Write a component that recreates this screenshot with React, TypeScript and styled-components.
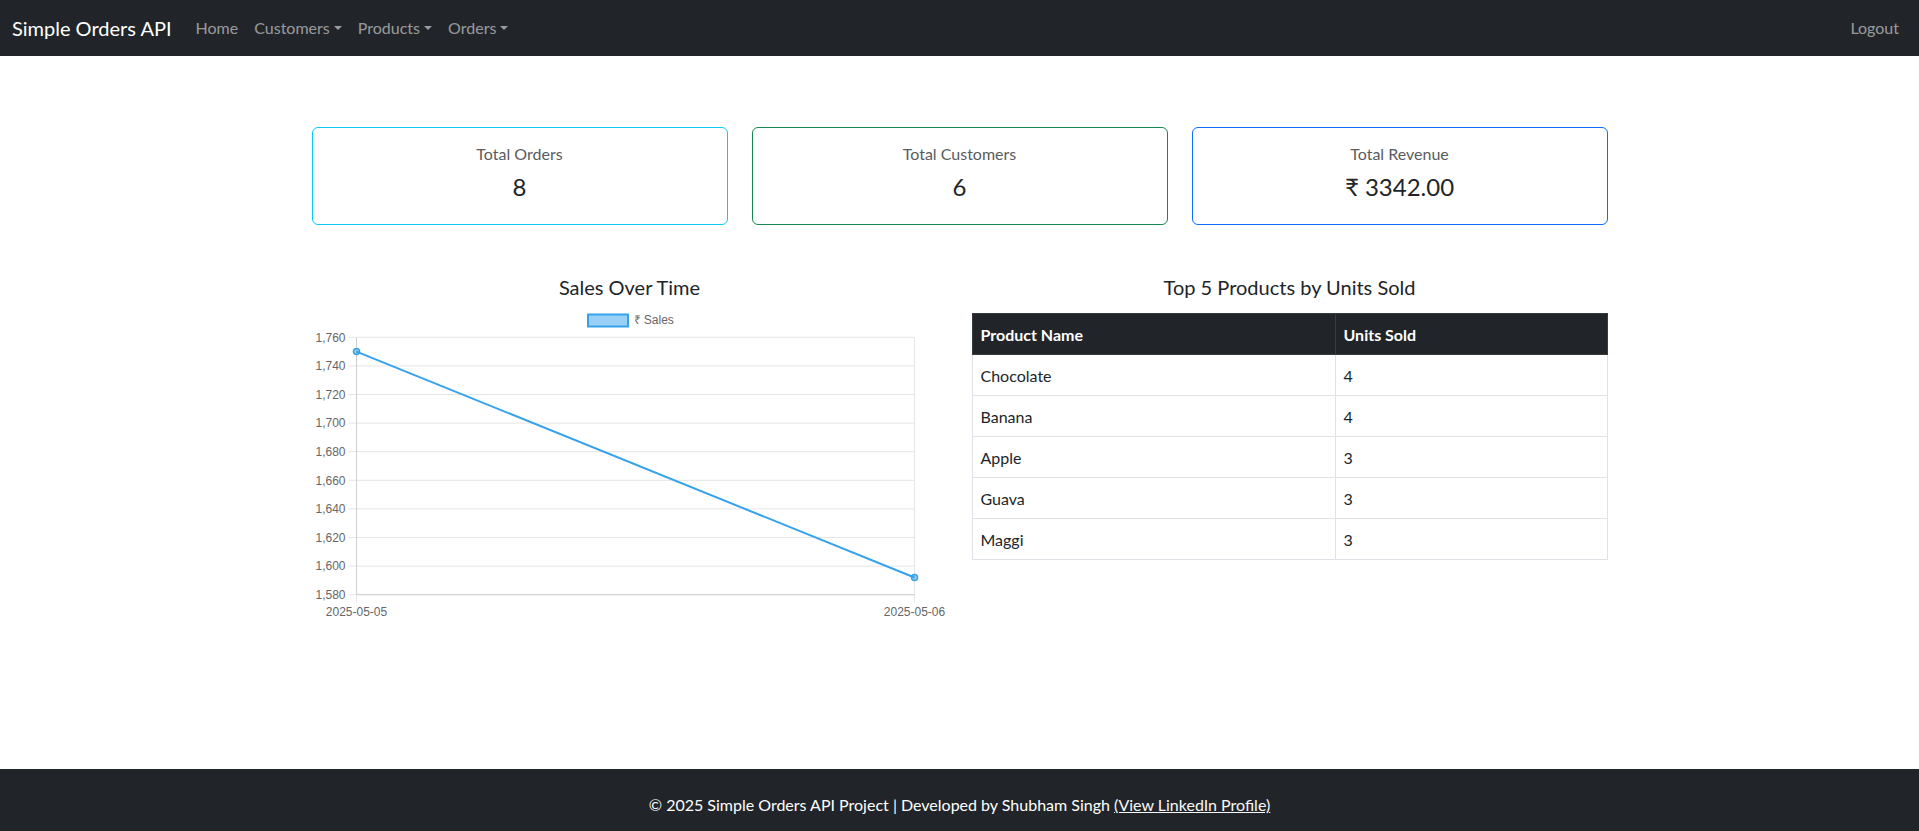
import React from 'react';
import styled, { createGlobalStyle, css } from 'styled-components';

const GlobalStyle = createGlobalStyle`
  *, *::before, *::after { box-sizing: border-box; }
  html, body { margin: 0; padding: 0; }
  body {
    font-family: Lato, "Open Sans", "Noto Sans", sans-serif;
    font-size: 16px;
    line-height: 1.5;
    color: #212529;
    background: #fff;
  }
`;

const Page = styled.div`
  min-height: 100vh;
  display: flex;
  flex-direction: column;
`;

// ---- navbar ----
const Navbar = styled.nav`
  background: #212529;
  height: 56px;
  padding: 8px 12px;
  display: flex;
  align-items: center;
`;

const Brand = styled.a`
  color: #fff;
  font-size: 20px;
  line-height: 30px;
  padding: 5px 0;
  margin-right: 16px;
  text-decoration: none;
`;

const NavList = styled.ul<{ $end?: boolean }>`
  display: flex;
  list-style: none;
  margin: 0;
  padding: 0;
  ${(p) => p.$end && css`margin-left: auto;`}
`;

const caret = css`
  &::after {
    content: '';
    display: inline-block;
    margin-left: 0.255em;
    vertical-align: 0.255em;
    border-top: 0.3em solid;
    border-right: 0.3em solid transparent;
    border-left: 0.3em solid transparent;
    border-bottom: 0;
  }
`;

const NavLink = styled.a<{ $dropdown?: boolean }>`
  display: block;
  padding: 8px;
  line-height: 24px;
  color: rgba(255, 255, 255, 0.55);
  text-decoration: none;
  ${(p) => p.$dropdown && caret}
`;

// ---- main ----
const Main = styled.main`
  flex: 1;
  width: 100%;
  max-width: 1320px;
  margin: 0 auto;
  padding: 71px 12px 0;
`;

const StatsRow = styled.div`
  display: grid;
  grid-template-columns: repeat(3, 1fr);
  gap: 24px;
`;

const StatCard = styled.div<{ $accent: string }>`
  border: 1px solid ${(p) => p.$accent};
  border-radius: 6px;
  padding: 16px;
  text-align: center;
`;

const StatLabel = styled.h6`
  margin: 0 0 10px;
  font-size: 16px;
  line-height: 1.2;
  font-weight: 400;
  color: #595c5f;
`;

const StatValue = styled.h4`
  margin: 0 0 6px;
  font-size: 24px;
  line-height: 1.2;
  font-weight: 400;
  color: #212529;
`;

const PanelRow = styled.div`
  display: grid;
  grid-template-columns: repeat(2, 1fr);
  gap: 24px;
  margin-top: 50px;
`;

const PanelTitle = styled.h5`
  margin: 0 0 14px;
  font-size: 20px;
  line-height: 1.2;
  font-weight: 400;
  text-align: center;
`;

const ChartSvg = styled.svg`
  display: block;
  width: 636px;
  height: 312px;
  font-family: "Liberation Sans", Arial, sans-serif;
`;

const Table = styled.table`
  width: 100%;
  border-collapse: collapse;

  th, td {
    padding: 9px 8px 7px;
    line-height: 24px;
    text-align: left;
    border: 1px solid #dee2e6;
  }

  thead th {
    background: #212529;
    color: #fff;
    font-weight: 700;
    border-color: #373b3e;
  }

  th:first-child {
    width: 363px;
  }
`;

// ---- footer ----
const Footer = styled.footer`
  background: #212529;
  color: #fff;
  text-align: center;
  padding: 24px 12px 14px;
  line-height: 24px;
`;

const FooterLink = styled.a`
  color: #f8f9fa;
  text-decoration: underline;
`;

const stats = [
  { label: 'Total Orders', value: '8', accent: '#0dcaf0' },
  { label: 'Total Customers', value: '6', accent: '#198754' },
  { label: 'Total Revenue', value: '₹ 3342.00', accent: '#0d6efd' },
];

const products = [
  { name: 'Chocolate', units: 4 },
  { name: 'Banana', units: 4 },
  { name: 'Apple', units: 3 },
  { name: 'Guava', units: 3 },
  { name: 'Maggi', units: 3 },
];

const sales = [
  { date: '2025-05-05', amount: 1750 },
  { date: '2025-05-06', amount: 1592 },
];

const SalesChart: React.FC = () => {
  const left = 44.5;
  const right = 602.5;
  const top = 24.3;
  const step = 28.6;
  const min = 1580;
  const max = 1760;
  const bottom = top + step * 9;
  const ticks = Array.from({ length: 10 }, (_, i) => max - i * 20);
  const yOf = (v: number) => bottom - ((v - min) / (max - min)) * (bottom - top);
  const xOf = (i: number) => left + (i * (right - left)) / (sales.length - 1);
  const pts = sales.map((s, i) => `${xOf(i)},${yOf(s.amount)}`).join(' ');

  return (
    <ChartSvg viewBox="0 0 636 312">
      {/* legend */}
      <rect x={276} y={1.5} width={40} height={12} fill="rgba(54,162,235,0.5)" stroke="#36a2eb" strokeWidth={2} />
      <text x={321.5} y={11} fontSize={12} fill="#666">₹ Sales</text>

      {/* horizontal grid + ticks */}
      {ticks.map((t, i) => {
        const y = top + i * step;
        return (
          <g key={t}>
            <line x1={left - 8} x2={right} y1={y} y2={y} stroke="#e5e5e5" strokeWidth={1} />
            <text x={33.5} y={y + 4.2} fontSize={12} fill="#666" textAnchor="end">
              {t.toLocaleString('en-US')}
            </text>
          </g>
        );
      })}

      {/* vertical grid + x labels */}
      {sales.map((s, i) => (
        <g key={s.date}>
          <line x1={xOf(i)} x2={xOf(i)} y1={top} y2={bottom + 8} stroke="#e5e5e5" strokeWidth={1} />
          <text x={xOf(i)} y={303} fontSize={12} fill="#666" textAnchor="middle">{s.date}</text>
        </g>
      ))}

      {/* axis borders */}
      <line x1={left} x2={left} y1={top} y2={bottom} stroke="#cfcfcf" strokeWidth={1} />
      <line x1={left} x2={right} y1={bottom} y2={bottom} stroke="#cfcfcf" strokeWidth={1} />

      <polyline points={pts} fill="none" stroke="#36a2eb" strokeWidth={2} />
      {sales.map((s, i) => (
        <circle key={s.date} cx={xOf(i)} cy={yOf(s.amount)} r={3} fill="rgba(54,162,235,0.5)" stroke="#36a2eb" strokeWidth={1.5} />
      ))}
    </ChartSvg>
  );
};

export default function App() {
  return (
    <Page>
      <GlobalStyle />
      <Navbar>
        <Brand href="#">Simple Orders API</Brand>
        <NavList>
          <li><NavLink href="#">Home</NavLink></li>
          <li><NavLink href="#" $dropdown>Customers</NavLink></li>
          <li><NavLink href="#" $dropdown>Products</NavLink></li>
          <li><NavLink href="#" $dropdown>Orders</NavLink></li>
        </NavList>
        <NavList $end>
          <li><NavLink href="#">Logout</NavLink></li>
        </NavList>
      </Navbar>

      <Main>
        <StatsRow>
          {stats.map((s) => (
            <StatCard key={s.label} $accent={s.accent}>
              <StatLabel>{s.label}</StatLabel>
              <StatValue>{s.value}</StatValue>
            </StatCard>
          ))}
        </StatsRow>

        <PanelRow>
          <div>
            <PanelTitle>Sales Over Time</PanelTitle>
            <SalesChart />
          </div>
          <div>
            <PanelTitle>Top 5 Products by Units Sold</PanelTitle>
            <Table>
              <thead>
                <tr>
                  <th>Product Name</th>
                  <th>Units Sold</th>
                </tr>
              </thead>
              <tbody>
                {products.map((p) => (
                  <tr key={p.name}>
                    <td>{p.name}</td>
                    <td>{p.units}</td>
                  </tr>
                ))}
              </tbody>
            </Table>
          </div>
        </PanelRow>
      </Main>

      <Footer>
        © 2025 Simple Orders API Project | Developed by Shubham Singh{' '}
        <FooterLink href="#">(View LinkedIn Profile)</FooterLink>
      </Footer>
    </Page>
  );
}
